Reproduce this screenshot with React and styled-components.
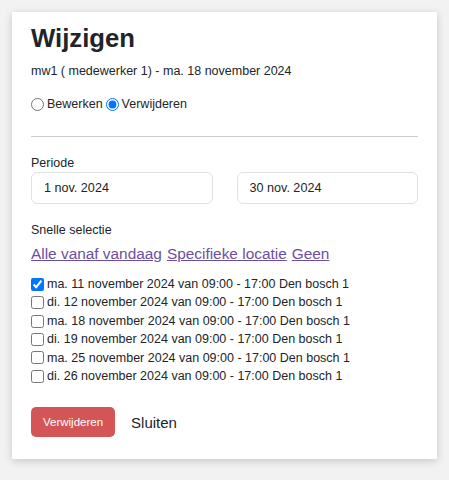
import styled, { createGlobalStyle } from "styled-components";

const GlobalStyle = createGlobalStyle`
  body {
    margin: 0;
    padding: 12px;
    background: #f2f2f2;
    font-family: "Liberation Sans", Arial, sans-serif;
    color: #212529;
  }
`;

const Card = styled.div`
  background: #fff;
  padding: 10px 19px 22px;
  box-shadow: 0 2px 8px rgba(0, 0, 0, 0.18);
`;

const Title = styled.h1`
  margin: 0;
  font-size: 25.7px;
  line-height: 32px;
  font-weight: bold;
`;

const Subtitle = styled.div`
  margin-top: 7px;
  font-size: 12.5px;
  line-height: 20px;
`;

const RadioRow = styled.div`
  margin-top: 13px;
  display: flex;
  align-items: center;
  font-size: 12.5px;
  line-height: 20px;
`;

const Choice = styled.label`
  display: flex;
  align-items: center;
  margin-right: 3px;
  input {
    width: 13px;
    height: 13px;
    margin: 0 3px 0 0;
  }
`;

const Divider = styled.hr`
  margin: 22px 0 0;
  border: 0;
  border-top: 1px solid #ccc;
`;

const Label = styled.div`
  margin-top: ${(p) => p.$top}px;
  font-size: 12.5px;
  line-height: 18px;
`;

const DateGrid = styled.div`
  display: grid;
  grid-template-columns: 1fr 1fr;
  gap: 24px;
`;

const DateInput = styled.input`
  box-sizing: border-box;
  height: 32px;
  width: 100%;
  padding: 0 12px;
  border: 1px solid #dee2e6;
  border-radius: 6px;
  font-family: inherit;
  font-size: 12.6px;
  color: #212529;
  background: #fff;
`;

const Links = styled.div`
  margin-top: 5px;
  display: flex;
  gap: 5px;
  font-size: 15.4px;
  line-height: 20px;
`;

const QuickLink = styled.a`
  color: #6c4fa0;
  text-decoration: underline;
  cursor: pointer;
`;

const SlotList = styled.div`
  margin-top: 11px;
  display: flex;
  flex-direction: column;
`;

const Slot = styled.label`
  display: flex;
  align-items: center;
  font-size: 12.5px;
  line-height: 18.4px;
  input {
    width: 13px;
    height: 13px;
    margin: 0 3px 0 0;
  }
`;

const Actions = styled.div`
  margin-top: 22px;
  display: flex;
  align-items: center;
  gap: 16px;
`;

const DangerButton = styled.button`
  height: 30px;
  padding: 0 12px;
  border: 0;
  border-radius: 5px;
  background: #d45556;
  color: #fff;
  font-family: inherit;
  font-size: 11.5px;
`;

const PlainButton = styled.button`
  padding: 0;
  border: 0;
  background: none;
  font-family: inherit;
  font-size: 15px;
  color: #212529;
`;

const slots = [
  { day: "ma. 11", checked: true },
  { day: "di. 12" },
  { day: "ma. 18" },
  { day: "di. 19" },
  { day: "ma. 25" },
  { day: "di. 26" },
];

export default function App() {
  return (
    <>
      <GlobalStyle />
      <Card>
        <Title>Wijzigen</Title>
        <Subtitle>mw1 ( medewerker 1) - ma. 18 november 2024</Subtitle>
        <RadioRow>
          <Choice>
            <input type="radio" name="mode" />
            Bewerken
          </Choice>
          <Choice>
            <input type="radio" name="mode" defaultChecked />
            Verwijderen
          </Choice>
        </RadioRow>
        <Divider />
        <Label $top={17}>Periode</Label>
        <DateGrid>
          <DateInput defaultValue="1 nov. 2024" />
          <DateInput defaultValue="30 nov. 2024" />
        </DateGrid>
        <Label $top={17}>Snelle selectie</Label>
        <Links>
          <QuickLink>Alle vanaf vandaag</QuickLink>
          <QuickLink>Specifieke locatie</QuickLink>
          <QuickLink>Geen</QuickLink>
        </Links>
        <SlotList>
          {slots.map((s) => (
            <Slot key={s.day}>
              <input type="checkbox" defaultChecked={s.checked} />
              {s.day} november 2024 van 09:00 - 17:00 Den bosch 1
            </Slot>
          ))}
        </SlotList>
        <Actions>
          <DangerButton>Verwijderen</DangerButton>
          <PlainButton>Sluiten</PlainButton>
        </Actions>
      </Card>
    </>
  );
}
